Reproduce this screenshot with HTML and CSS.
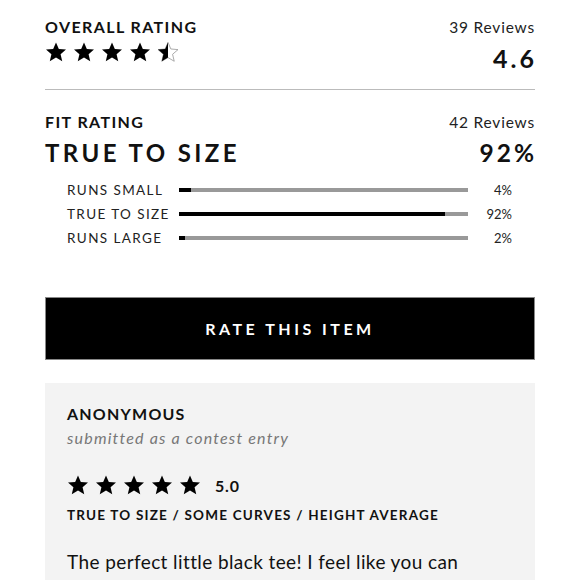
FILE: index.html
```html
<!DOCTYPE html>
<html>
<head>
<meta charset="utf-8">
<link rel="stylesheet" href="styles.css">
</head>
<body>
<svg width="0" height="0" class="defs">
  <defs>
    <symbol id="star" viewBox="0 0 24 24"><path d="M12 1.5l3.1 7.2 7.8.7-5.9 5.1 1.8 7.6L12 18.1l-6.8 4 1.8-7.6L1.1 9.4l7.8-.7z"/></symbol>
    <clipPath id="half"><rect x="0" y="0" width="12" height="24"/></clipPath>
  </defs>
</svg>
<main class="page">
  <section class="overall">
    <div class="row">
      <h2 class="label">OVERALL RATING</h2>
      <span class="count">39 Reviews</span>
    </div>
    <div class="row row-score">
      <div class="stars">
        <svg class="star"><use href="#star"/></svg>
        <svg class="star"><use href="#star"/></svg>
        <svg class="star"><use href="#star"/></svg>
        <svg class="star"><use href="#star"/></svg>
        <svg class="star" viewBox="0 0 24 24"><path class="outline" d="M12 1.5l3.1 7.2 7.8.7-5.9 5.1 1.8 7.6L12 18.1l-6.8 4 1.8-7.6L1.1 9.4l7.8-.7z"/><path clip-path="url(#half)" d="M12 1.5l3.1 7.2 7.8.7-5.9 5.1 1.8 7.6L12 18.1l-6.8 4 1.8-7.6L1.1 9.4l7.8-.7z"/></svg>
      </div>
      <span class="score">4.6</span>
    </div>
  </section>
  <section class="fit">
    <div class="row">
      <h2 class="label">FIT RATING</h2>
      <span class="count">42 Reviews</span>
    </div>
    <div class="row">
      <span class="fit-title">TRUE TO SIZE</span>
      <span class="fit-pct">92%</span>
    </div>
    <div class="bars">
      <div class="bar-row"><span class="bar-label">RUNS SMALL</span><div class="track"><div class="fill" style="width:4%"></div></div><span class="bar-pct">4%</span></div>
      <div class="bar-row"><span class="bar-label">TRUE TO SIZE</span><div class="track"><div class="fill" style="width:92%"></div></div><span class="bar-pct">92%</span></div>
      <div class="bar-row"><span class="bar-label">RUNS LARGE</span><div class="track"><div class="fill" style="width:2%"></div></div><span class="bar-pct">2%</span></div>
    </div>
  </section>
  <button class="rate">RATE THIS ITEM</button>
  <article class="review">
    <h3 class="author">ANONYMOUS</h3>
    <p class="meta">submitted as a contest entry</p>
    <div class="review-stars">
      <div class="stars">
        <svg class="star"><use href="#star"/></svg>
        <svg class="star"><use href="#star"/></svg>
        <svg class="star"><use href="#star"/></svg>
        <svg class="star"><use href="#star"/></svg>
        <svg class="star"><use href="#star"/></svg>
      </div>
      <span class="review-score">5.0</span>
    </div>
    <p class="tags">TRUE TO SIZE / SOME CURVES / HEIGHT AVERAGE</p>
    <p class="body">The perfect little black tee! I feel like you can wear it with anything and it fits great.</p>
  </article>
</main>
</body>
</html>
```
FILE: styles.css
```css
* { box-sizing: border-box; margin: 0; padding: 0; }
html, body { background: #fff; }
body { font-family: Lato, "Liberation Sans", sans-serif; color: #111; overflow: hidden; height: 580px; }
.defs { position: absolute; }
.page { padding: 16px 45px 0 45px; }
.row { display: flex; justify-content: space-between; align-items: center; }
.label { font-size: 16px; font-weight: 700; letter-spacing: 1.4px; line-height: 22px; }
.count { font-size: 15.5px; line-height: 22px; color: #222; letter-spacing: 0.8px; }
.overall { border-bottom: 1px solid #bbb; padding-bottom: 18px; }
.row-score { margin-top: 3px; align-items: flex-start; }
.stars { display: flex; gap: 6px; }
.star { width: 22px; height: 22px; fill: #000; display: block; }
.star .outline { fill: none; stroke: #999; stroke-width: 0.9; }
.score { font-size: 25px; font-weight: 700; letter-spacing: 3px; line-height: 26px; margin-top: 4px; margin-right: -2px; }
.fit { padding-top: 21px; }
.fit .row:nth-child(2) { margin-top: 6px; }
.fit-title { font-size: 24px; font-weight: 700; letter-spacing: 3.4px; line-height: 28px; }
.fit-pct { font-size: 24.5px; font-weight: 700; letter-spacing: 3px; line-height: 28px; margin-right: -2px; }
.bars { padding: 14px 22px 0 22px; display: flex; flex-direction: column; gap: 6px; }
.bar-row { display: flex; align-items: center; height: 18px; }
.bar-label { width: 112px; font-size: 13.5px; letter-spacing: 1.4px; color: #222; }
.track { width: 289px; height: 4px; background: #999; position: relative; }
.fill { height: 4px; background: #000; min-width: 4px; }
.bar-pct { flex: 1; text-align: right; font-size: 13px; color: #222; margin-right: 1px; }
.rate { display: block; width: 100%; height: 63px; margin-top: 50px; background: #000; color: #fff; border: 1px solid #888; font-family: inherit; font-size: 16px; font-weight: 700; letter-spacing: 3.5px; }
.review { margin-top: 23px; background: #f3f3f3; padding: 20px 22px 20px 22px; height: 260px; }
.author { font-size: 16px; font-weight: 700; letter-spacing: 1.2px; line-height: 22px; }
.meta { font-size: 16px; font-style: italic; color: #777; line-height: 22px; margin-top: 2px; letter-spacing: 1.2px; }
.review-stars { display: flex; align-items: center; margin-top: 25px; gap: 14px; }
.review-score { font-size: 16px; font-weight: 700; letter-spacing: 0.8px; }
.tags { font-size: 13.5px; font-weight: 700; letter-spacing: 1.2px; margin-top: 10px; line-height: 18px; }
.body { font-size: 19px; line-height: 28px; margin-top: 24px; color: #111; letter-spacing: 0.4px; max-width: 420px; }
```
